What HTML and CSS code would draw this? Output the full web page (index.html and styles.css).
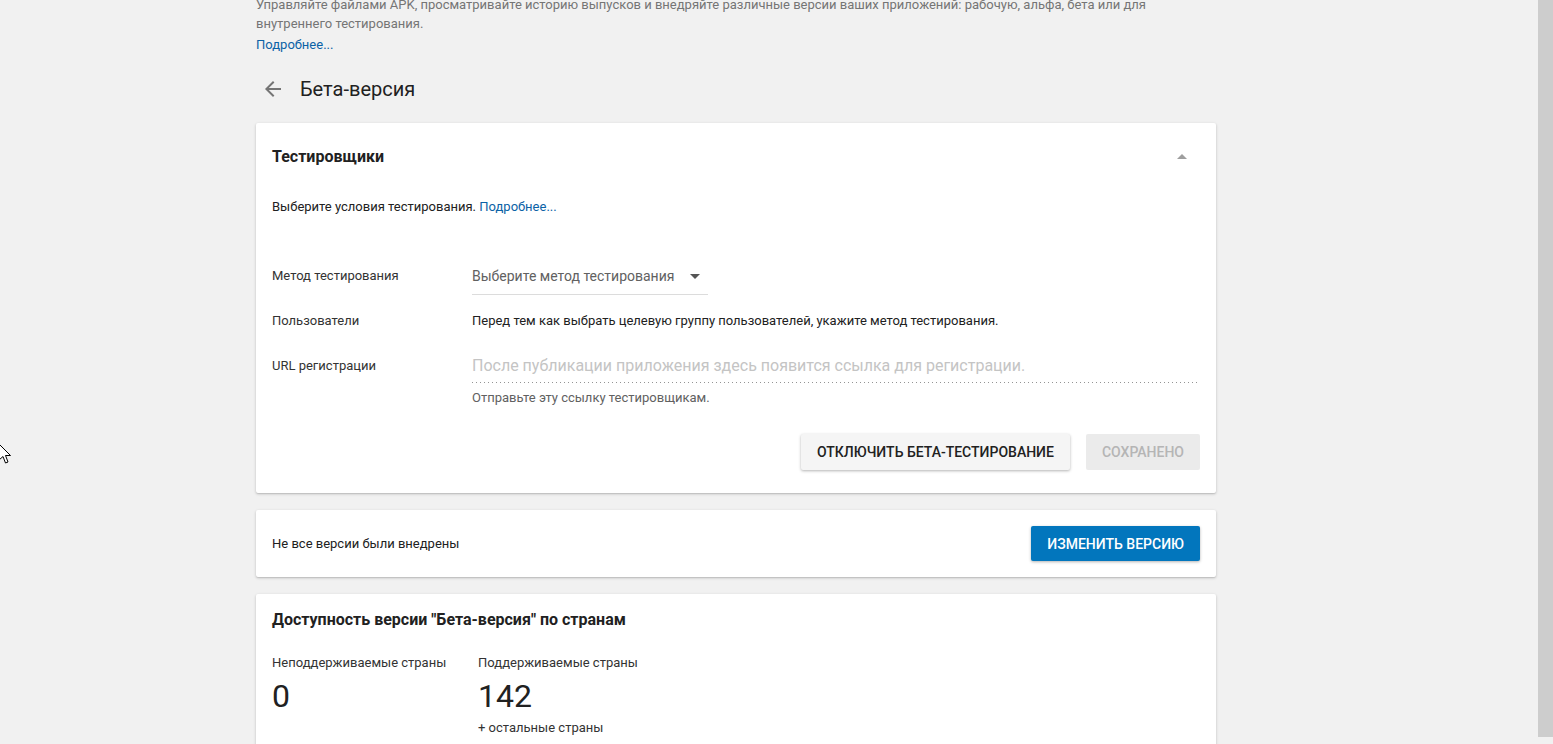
FILE: index.html
```html
<!DOCTYPE html>
<html lang="ru">
<head>
<meta charset="utf-8">
<title>Бета-версия</title>
<link rel="stylesheet" href="styles.css">
</head>
<body>
<div class="scrollbar"></div>
<svg class="cursor" width="14" height="22" viewBox="0 0 14 22"><path d="M1 1 L1 17 L5 13.5 L7.5 20 L10 19 L7.5 12.5 L12.5 12.5 Z" fill="#fff" stroke="#000" stroke-width="1"/></svg>
<main class="page">
  <p class="intro">Управляйте файлами APK, просматривайте историю выпусков и внедряйте различные версии ваших приложений: рабочую, альфа, бета или для внутреннего тестирования.</p>
  <a class="intro-link" href="#">Подробнее...</a>

  <div class="page-header">
    <svg class="back" width="24" height="24" viewBox="0 0 24 24"><path d="M20 11H7.83l5.59-5.59L12 4l-8 8 8 8 1.41-1.41L7.83 13H20v-2z" fill="#757575"/></svg>
    <h1 class="page-title">Бета-версия</h1>
  </div>

  <section class="card">
    <div class="card-head">
      <h2 class="card-title">Тестировщики</h2>
      <span class="collapse"><span class="tri-up"></span></span>
    </div>
    <div class="card-body">
      <p class="desc">Выберите условия тестирования. <a href="#">Подробнее...</a></p>

      <div class="form-row first">
        <div class="label">Метод тестирования</div>
        <div class="value">
          <div class="select">
            <span>Выберите метод тестирования</span>
            <span class="tri-down"></span>
          </div>
        </div>
      </div>

      <div class="form-row second">
        <div class="label">Пользователи</div>
        <div class="value text">Перед тем как выбрать целевую группу пользователей, укажите метод тестирования.</div>
      </div>

      <div class="form-row third">
        <div class="label pad">URL регистрации</div>
        <div class="value">
          <div class="url-field">После публикации приложения здесь появится ссылка для регистрации.</div>
          <div class="hint">Отправьте эту ссылку тестировщикам.</div>
        </div>
      </div>

      <div class="actions">
        <button class="btn raised">Отключить бета-тестирование</button>
        <button class="btn disabled">Сохранено</button>
      </div>
    </div>
  </section>

  <section class="card notice">
    <span class="notice-text">Не все версии были внедрены</span>
    <button class="btn primary">Изменить версию</button>
  </section>

  <section class="card countries">
    <h2 class="card-title">Доступность версии "Бета-версия" по странам</h2>
    <div class="stats">
      <div class="stat first-stat">
        <div class="stat-label">Неподдерживаемые страны</div>
        <div class="stat-num">0</div>
      </div>
      <div class="stat">
        <div class="stat-label">Поддерживаемые страны</div>
        <div class="stat-num">142</div>
        <div class="stat-sub">+ остальные страны</div>
      </div>
    </div>
  </section>
</main>
</body>
</html>
```

FILE: styles.css
```css
html, body {
  margin: 0;
  padding: 0;
  overflow: hidden;
  height: 744px;
}
body {
  background: #f1f1f1;
  font-family: Roboto, "Noto Sans", Arial, sans-serif;
  color: #212121;
  position: relative;
}
.scrollbar {
  position: fixed;
  top: 0;
  right: 0;
  width: 15px;
  height: 737px;
  background: #cdcdcd;
}
.cursor {
  position: absolute;
  left: -2px;
  top: 443px;
}
.page {
  width: 960px;
  margin-left: 256px;
}
.intro {
  margin: -5px 0 0;
  max-width: 900px;
  font-size: 13px;
  line-height: 19px;
  color: #757575;
}
a {
  color: #0b62a6;
  text-decoration: none;
}
.intro-link {
  display: block;
  margin-top: 2px;
  font-size: 13px;
  line-height: 20px;
}
.page-header {
  display: flex;
  align-items: center;
  height: 48px;
  margin-top: 10px;
  padding-left: 5px;
  gap: 15px;
}
.back { display: block; }
.page-title {
  margin: 0;
  font-size: 20px;
  font-weight: 400;
  color: #212121;
}
.card {
  margin-top: 10px;
  background: #fff;
  border-radius: 2px;
  box-shadow: 0 1px 3px rgba(0,0,0,0.22), 0 1px 1px rgba(0,0,0,0.06);
}
.card-head {
  height: 67px;
  display: flex;
  align-items: center;
  justify-content: space-between;
  padding: 0 22px 0 16px;
}
.card-title {
  margin: 0;
  font-size: 16px;
  font-weight: 700;
  line-height: 20px;
  color: #212121;
}
.collapse {
  width: 24px;
  height: 24px;
  display: flex;
  align-items: center;
  justify-content: center;
}
.tri-up {
  width: 0;
  height: 0;
  border-left: 5px solid transparent;
  border-right: 5px solid transparent;
  border-bottom: 5px solid #9e9e9e;
}
.card-body {
  padding: 7px 16px 23px;
}
.desc {
  margin: 0;
  font-size: 13px;
  line-height: 20px;
  color: #212121;
}
.form-row {
  display: grid;
  grid-template-columns: 200px 1fr;
  font-size: 13px;
  line-height: 20px;
}
.form-row.first { margin-top: 49px; }
.form-row.second { margin-top: 16px; }
.form-row.third { margin-top: 23px; }
.label { color: #333; }
.label.pad { padding-top: 2px; }
.value.text { color: #212121; }
.select {
  width: 236px;
  height: 28px;
  box-sizing: content-box;
  border-bottom: 1px solid #dcdcdc;
  display: flex;
  justify-content: space-between;
  align-items: flex-start;
  font-size: 14px;
  line-height: 20px;
  color: #616161;
}
.tri-down {
  margin-top: 8px;
  margin-right: 8px;
  width: 0;
  height: 0;
  border-left: 5px solid transparent;
  border-right: 5px solid transparent;
  border-top: 5px solid #555;
}
.url-field {
  font-size: 16px;
  line-height: 24px;
  color: #c4c4c4;
  background-image: linear-gradient(to right, rgba(0,0,0,0.42) 0%, rgba(0,0,0,0.42) 33%, transparent 0%);
  background-size: 4px 1px;
  background-repeat: repeat-x;
  background-position: 0 bottom;
  padding-bottom: 5px;
  margin-right: 3px;
}
.hint {
  margin-top: 5px;
  font-size: 13px;
  line-height: 20px;
  color: #616161;
}
.actions {
  margin-top: 26px;
  display: flex;
  justify-content: flex-end;
  gap: 16px;
}
.btn {
  font-family: Roboto, "Noto Sans", Arial, sans-serif;
  font-size: 14px;
  font-weight: 500;
  text-transform: uppercase;
  height: 36px;
  padding: 0 16px;
  border: none;
  border-radius: 2px;
  cursor: pointer;
}
.btn.raised {
  background: #f5f5f5;
  color: #212121;
  box-shadow: 0 1px 3px rgba(0,0,0,0.3);
}
.btn.disabled {
  background: #ebebeb;
  color: #b5b5b5;
}
.btn.primary {
  height: 35px;
  background: #0276bd;
  color: #fff;
  box-shadow: 0 1px 3px rgba(0,0,0,0.3);
}
.card.notice {
  margin-top: 17px;
  display: flex;
  justify-content: space-between;
  align-items: center;
  padding: 16px;
}
.notice-text {
  font-size: 13px;
  color: #212121;
}
.card.countries {
  margin-top: 17px;
  padding: 16px 16px 20px;
}
.stats {
  display: flex;
  margin-top: 23px;
}
.stat-label {
  font-size: 13px;
  line-height: 20px;
  color: #333;
}
.first-stat { width: 206px; }
.stat-num {
  margin-top: 3px;
  font-size: 32px;
  line-height: 40px;
  color: #212121;
}
.stat-sub {
  margin-top: 2px;
  font-size: 13px;
  line-height: 20px;
  color: #333;
}
```
